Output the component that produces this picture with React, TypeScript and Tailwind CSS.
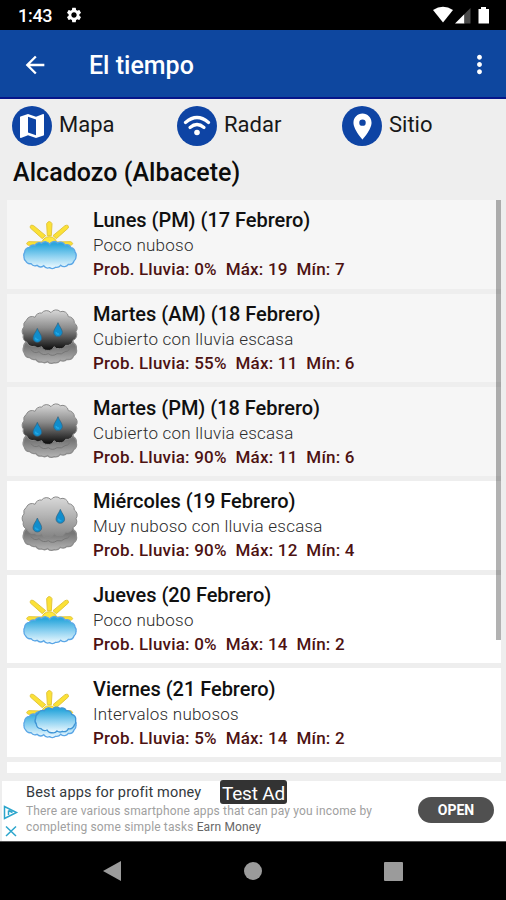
// Pantalla de previsión del tiempo
import { MdArrowBack, MdLocationOn, MdMap, MdMoreVert, MdSettings } from 'react-icons/md';

type Sky = 'few' | 'intervals' | 'overcast' | 'cloudy';

interface Day {
  title: string;
  sky: Sky;
  text: string;
  rain: number;
  max: number;
  min: number;
  past?: boolean;
}

const days: Day[] = [
  { title: 'Lunes (PM) (17 Febrero)', sky: 'few', text: 'Poco nuboso', rain: 0, max: 19, min: 7, past: true },
  { title: 'Martes (AM) (18 Febrero)', sky: 'overcast', text: 'Cubierto con lluvia escasa', rain: 55, max: 11, min: 6, past: true },
  { title: 'Martes (PM) (18 Febrero)', sky: 'overcast', text: 'Cubierto con lluvia escasa', rain: 90, max: 11, min: 6, past: true },
  { title: 'Miércoles (19 Febrero)', sky: 'cloudy', text: 'Muy nuboso con lluvia escasa', rain: 90, max: 12, min: 4 },
  { title: 'Jueves (20 Febrero)', sky: 'few', text: 'Poco nuboso', rain: 0, max: 14, min: 2 },
  { title: 'Viernes (21 Febrero)', sky: 'intervals', text: 'Intervalos nubosos', rain: 5, max: 14, min: 2 },
];

// une los puntos con pequeños arcos hacia fuera
function scallop(points: number[][], r: number) {
  const [first, ...rest] = points;
  return `M${first.join(' ')}` + [...rest, first].map(([x, y]) => `A${r} ${r} 0 0 1 ${x} ${y}`).join('') + 'Z';
}

const blueCloud = scallop([
  [29, 142], [43, 127], [60, 121], [80, 115], [104, 118], [128, 114], [150, 120], [168, 128],
  [180, 141], [183, 155], [177, 168], [160, 178], [137, 181], [122, 187],
  [104, 188], [86, 182], [66, 181], [48, 176], [32, 168], [27, 155],
], 15);
const frontCloud = scallop([
  [62, 133], [69, 119], [88, 110], [112, 106], [134, 103], [154, 110], [170, 121],
  [182, 139], [178, 153], [160, 164], [142, 172], [126, 171], [111, 176], [96, 168],
  [78, 164], [64, 150],
], 15);
const grayCloud = scallop([
  [27, 84], [34, 64], [60, 55], [80, 42], [108, 41], [136, 38],
  [160, 53], [178, 72], [183, 98], [174, 124], [152, 139], [134, 149],
  [117, 143], [98, 154], [80, 143], [58, 142], [36, 130], [25, 108],
], 18);
const lowCloud = scallop([
  [26, 144], [36, 128], [60, 118], [90, 118], [120, 118], [150, 120], [176, 132], [184, 150],
  [176, 170], [156, 181], [136, 184], [118, 191], [98, 188], [80, 189], [62, 181], [44, 176],
  [28, 162],
], 18);

const rays = [
  'M97 92 L95 56 Q103 43 111 56 L109 92Z',
  'M82 101 L46 69 Q44 57 56 62 L92 92Z',
  'M124 101 L160 69 Q162 57 150 62 L114 92Z',
  'M82 118 L41 121 Q29 116 41 110 L82 111Z',
  'M124 118 L167 121 Q179 116 167 110 L124 111Z',
];

function Drop({ x, y }: { x: number; y: number }) {
  return (
    <g transform={`translate(${x} ${y})`}>
      <path d="M0 -21C4 -10 13 -1 13 8A13 13 0 0 1 -13 8C-13 -1 -4 -10 0 -21Z" fill="#118dcc" stroke="#35617c" strokeWidth="2" />
      <path d="M-5 7a5 5 0 0 0 8 5" fill="none" stroke="#1fa8e6" strokeWidth="5" />
    </g>
  );
}

function SkyIcon({ sky, id }: { sky: Sky; id: string }) {
  const sunny = sky === 'few' || sky === 'intervals';
  return (
    <svg className="h-[70px] w-[70px] shrink-0" viewBox="0 0 210 210">
      <defs>
        <linearGradient id={`${id}-blue`} x1="0" y1="0" x2="0" y2="1">
          <stop offset="0.1" stopColor="#2ba7dc" />
          <stop offset="0.55" stopColor="#8fd2f1" />
          <stop offset="1" stopColor="#f1fbff" />
        </linearGradient>
        <linearGradient id={`${id}-gray`} x1="0" y1="0" x2="0" y2="1">
          <stop offset="0" stopColor="#d9d9d9" />
          <stop offset="0.45" stopColor={sky === 'overcast' ? '#8c8c8c' : '#b5b5b5'} />
          <stop offset="1" stopColor={sky === 'overcast' ? '#080808' : '#848484'} />
        </linearGradient>
        <linearGradient id={`${id}-low`} x1="0" y1="0" x2="0" y2="1">
          <stop offset="0.4" stopColor="#777" />
          <stop offset="1" stopColor="#b4b4b4" />
        </linearGradient>
      </defs>
      {sunny ? (
        <>
          {rays.map((d) => (
            <path key={d} d={d} fill="#fbe136" stroke="#e3c63c" strokeWidth="3" />
          ))}
          <circle cx="103" cy="118" r="23" fill="#ffe83d" stroke="#e6c52e" strokeWidth="3" />
          <path d={blueCloud} fill={`url(#${id}-blue)`} stroke="#5aa6e6" strokeWidth="4" />
          {sky === 'intervals' && (
            <path d={frontCloud} fill={`url(#${id}-blue)`} stroke="#3f95d6" strokeWidth="4" />
          )}
        </>
      ) : (
        <>
          <path d={lowCloud} fill={`url(#${id}-low)`} stroke="#8d8d8d" strokeWidth="4" />
          <path d="M48 152q10 14 24 6q12 14 28 6q12 10 26 0q14 4 24 -6q8 0 14 -8" fill="none" stroke="#777" strokeWidth="3" />
          <path d={grayCloud} fill={`url(#${id}-gray)`} stroke="#8a8a8a" strokeWidth="3" />
          <Drop x={67} y={sky === 'overcast' ? 109 : 117} />
          <Drop x={sky === 'overcast' ? 129 : 136} y={sky === 'overcast' ? 92 : 91} />
        </>
      )}
    </svg>
  );
}

function DayCard({ day, id }: { day: Day; id: string }) {
  return (
    <div className={`flex h-[88.5px] shrink-0 pl-[8.5px] pt-[5.3px] ${day.past ? 'bg-[#f6f6f6]' : 'bg-white'}`}>
      <SkyIcon sky={day.sky} id={id} />
      <div className="ml-2 mt-[3px] whitespace-pre">
        <p className="text-[20px] leading-[24px] font-medium tracking-[-0.03px] text-[#101010]">{day.title}</p>
        <p className="mt-px text-[17px] leading-[24px] font-light tracking-[0.23px] text-[#2c2c2c]">{day.text}</p>
        <p className="text-[17px] leading-[25px] font-medium tracking-[0.2px] text-[#4d1212]">
          {`Prob. Lluvia: ${day.rain}%  Máx: ${day.max}  Mín: ${day.min}`}
        </p>
      </div>
    </div>
  );
}

export default function App() {
  return (
    <div className="flex h-[900px] w-[506px] flex-col overflow-hidden bg-[#eeeeee] font-[Roboto,sans-serif]">
      {/* barra de estado */}
      <div className="flex h-[29.5px] shrink-0 items-center bg-black pl-[18px] pr-[16px] text-white">
        <span className="w-[47px] pt-[3px] text-[18px] leading-none font-medium tracking-[-0.3px]">1:43</span>
        <MdSettings size={18} />
        <svg className="ml-auto h-5 w-[57px]" viewBox="0 0 57 20" fill="#fff">
          <path d="M0 5Q10 -1.5 20 5L10 17.5Z" />
          <path d="M22 18.5L31.5 9V18.5Z" />
          <path d="M31.5 9L37.5 3V18.5H31.5Z" fill="#4a4a4a" />
          <path d="M48 2h5v2h3v14.5H45.5V4H48Z" />
        </svg>
      </div>

      {/* cabecera */}
      <header className="flex h-[69px] shrink-0 items-center border-b-2 border-[#06168a] bg-[#0e479f] pl-[21px] pr-[12px] pt-[3px] text-white">
        <MdArrowBack size={28} />
        <h1 className="ml-10 pt-[2px] text-[25px] leading-none font-medium">El tiempo</h1>
        <MdMoreVert className="ml-auto" size={29} />
      </header>

      {/* accesos */}
      <nav className="flex h-[55px] shrink-0 items-center pl-3 text-[22px] leading-none text-[#181818]">
        <div className="flex w-[165px] items-center gap-[7px]">
          <span className="flex size-10 items-center justify-center rounded-full bg-[#0e44a4] text-white">
            <MdMap size={32} />
          </span>
          <span className="pb-[2px]">Mapa</span>
        </div>
        <div className="flex w-[165px] items-center gap-[7px]">
          <span className="flex size-10 items-center justify-center rounded-full bg-[#0e44a4]">
            <svg className="h-7 w-7" viewBox="0 0 28 28" fill="none" stroke="#fff" strokeWidth="3.2" strokeLinecap="round">
              <path d="M2.5 10.5Q14 0.5 25.5 10.5" />
              <path d="M7 15.5Q14 9.5 21 15.5" />
              <circle cx="14" cy="20.5" r="2.8" fill="#fff" stroke="none" />
            </svg>
          </span>
          <span className="pb-[2px]">Radar</span>
        </div>
        <div className="flex items-center gap-[7px]">
          <span className="flex size-10 items-center justify-center rounded-full bg-[#0e44a4] text-white">
            <MdLocationOn size={31} />
          </span>
          <span className="pb-[2px]">Sitio</span>
        </div>
      </nav>
      <h2 className="h-[46.5px] shrink-0 pl-[13px] pt-[4px] text-[25px] leading-[30px] font-medium tracking-[0.05px] text-[#0c0c0c]">
        Alcadozo (Albacete)
      </h2>

      {/* lista de días */}
      <main className="relative ml-[6.5px] mr-[5px] flex h-[573px] shrink-0 flex-col gap-[5.2px] overflow-hidden">
        {days.map((day, i) => (
          <DayCard key={day.title} day={day} id={`day${i}`} />
        ))}
        <div className="h-[88.5px] shrink-0 bg-white" />
        <div className="absolute right-[0.5px] top-0 h-[440px] w-[5px] bg-black/30" />
      </main>

      {/* anuncio */}
      <div className="relative mt-2 ml-[2px] flex h-[60px] shrink-0 bg-white">
        <div className="flex w-6 flex-col pt-[24px]">
          <svg className="h-[34px] w-[17px]" viewBox="0 0 17 34" fill="none" stroke="#2ba5cc" strokeWidth="1.5">
            <path d="M2.5 1.5V13.5L14.5 7.5ZM6.5 5.5V10M6.5 5.5L10.5 7.5" />
            <path d="M4 21.5L14 31M14 21.5L4 31" />
          </svg>
        </div>
        <div className="whitespace-nowrap pt-[3px]">
          <p className="text-[14.5px] leading-[18.5px] tracking-[0.16px] text-[#33393d]">Best apps for profit money</p>
          <p className="text-[12px] leading-[16px] tracking-[0.15px] text-[#a0a0a0]">
            There are various smartphone apps that can pay you income by
            <br />
            completing some simple tasks <span className="text-[#666]">Earn Money</span>
          </p>
        </div>
        <div className="absolute left-[218px] top-[-1px] h-[24px] w-[67px] rounded-[3px] bg-[#333] text-center text-[19px] leading-[27px] tracking-[-0.2px] whitespace-nowrap text-white">
          Test Ad
        </div>
        <button className="ml-auto mr-3 mt-4 h-[26px] w-[76px] rounded-full bg-[#505050] text-[14px] leading-none font-bold text-white">
          OPEN
        </button>
      </div>

      {/* navegación del sistema */}
      <div className="flex flex-1 items-center justify-between border-t border-[#555] bg-black pl-[102px] pr-[103px]">
        <svg className="h-[22px] w-5" viewBox="0 0 20 22" fill="#9b9b9b">
          <path d="M1 11L19 1V21Z" />
        </svg>
        <span className="size-[18px] rounded-full bg-[#9b9b9b]" />
        <span className="size-[19px] rounded-[1px] bg-[#9b9b9b]" />
      </div>
    </div>
  );
}
